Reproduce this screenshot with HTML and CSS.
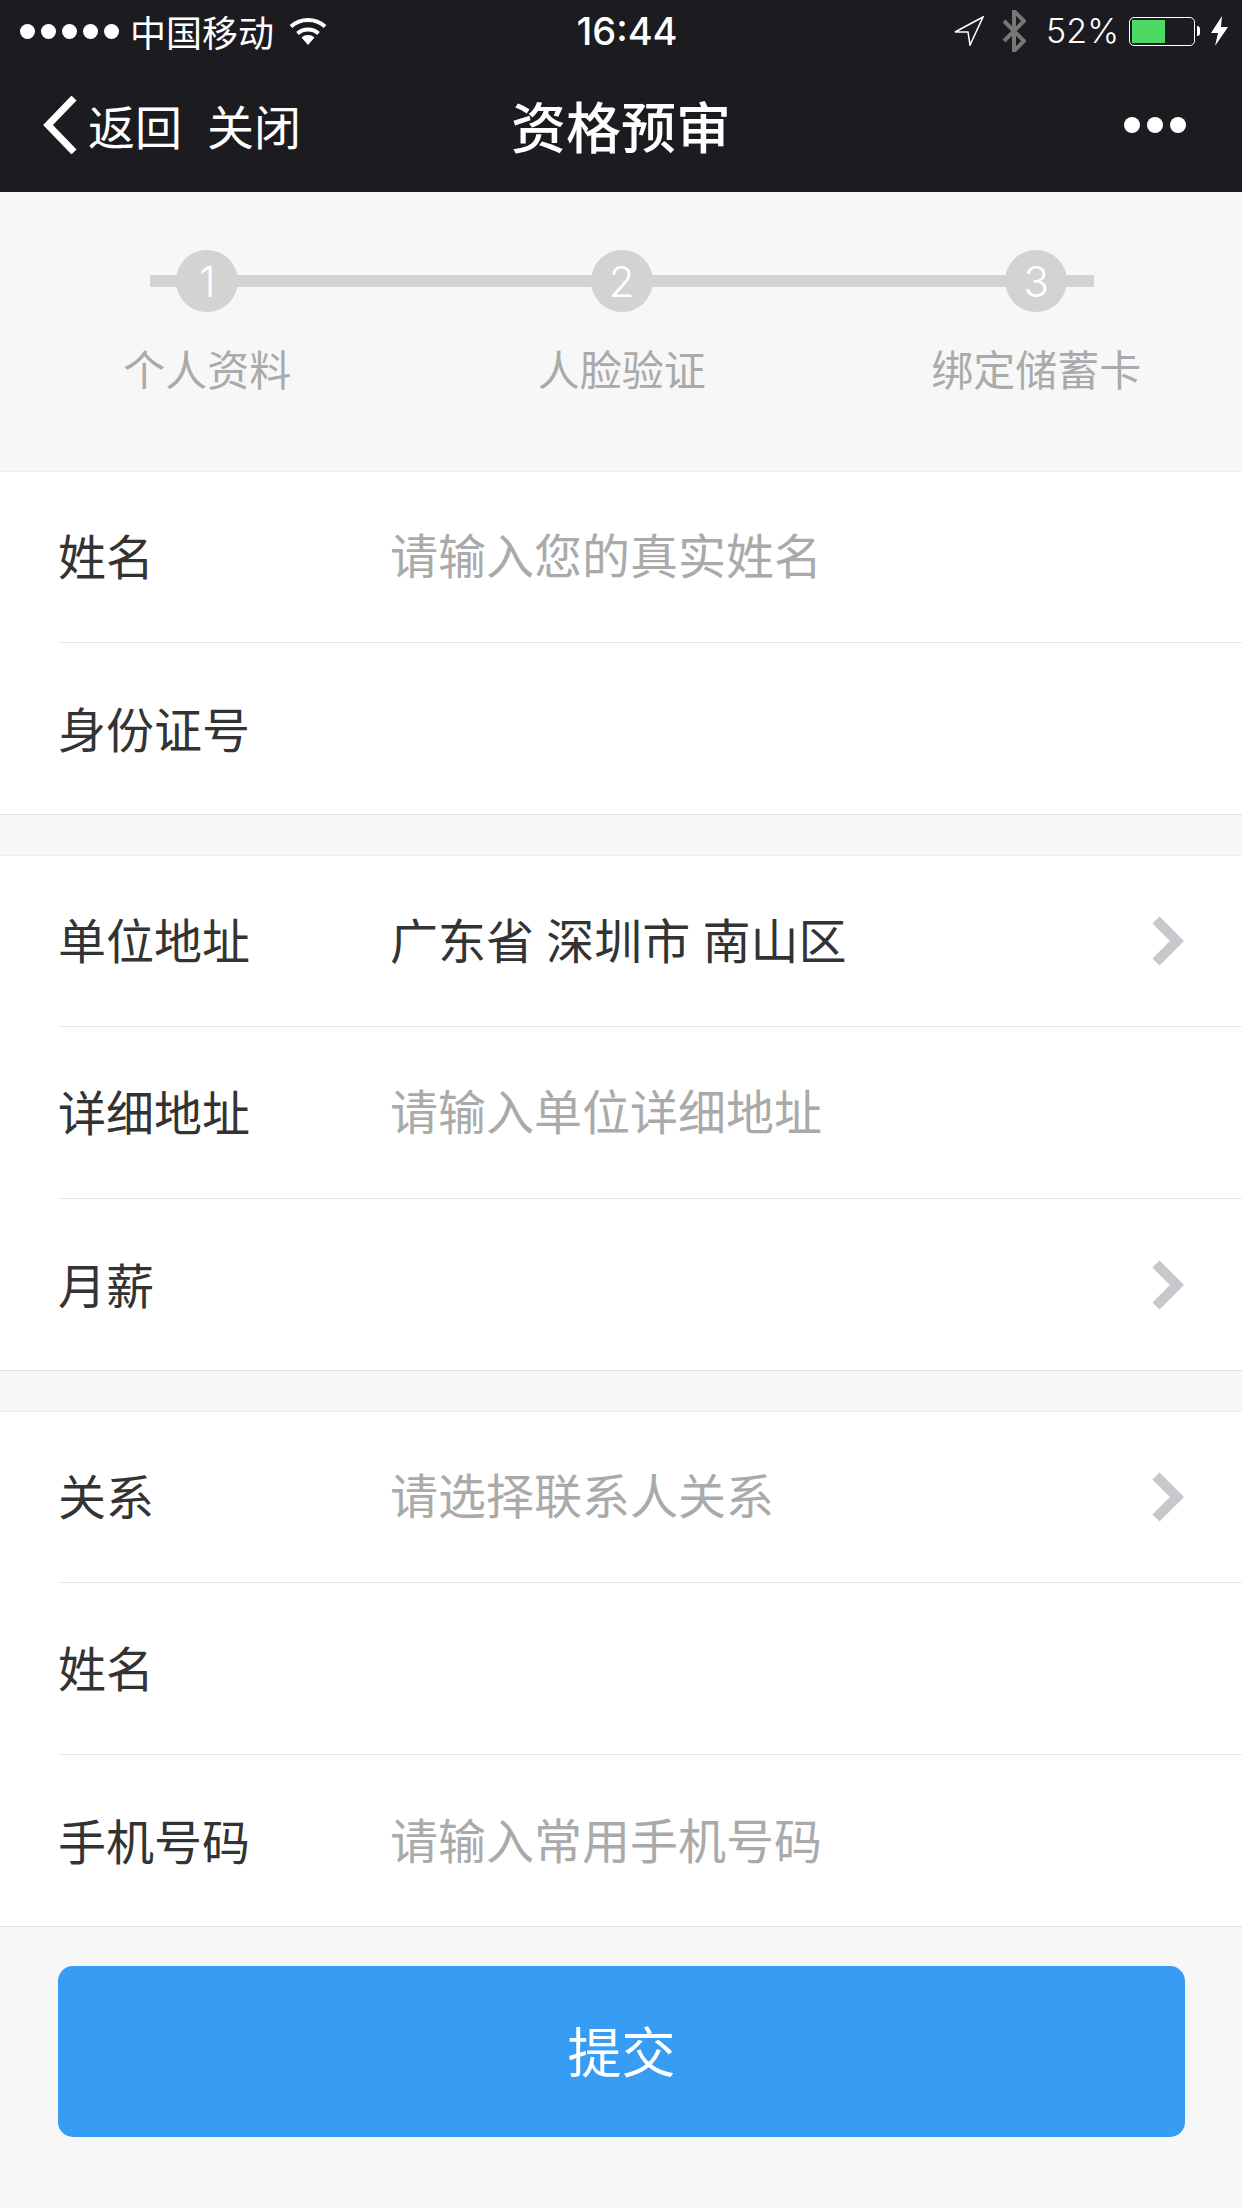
FILE: index.html
```html
<!DOCTYPE html>
<html lang="zh-CN">
<head>
<meta charset="utf-8">
<title>资格预审</title>
<link rel="stylesheet" href="styles.css">
</head>
<body>
<header class="top">
  <div class="status">
    <div class="status-left">
      <div class="signal"><i></i><i></i><i></i><i></i><i></i></div>
      <span class="carrier">中国移动</span>
      <svg class="wifi" width="38" height="27" viewBox="0 0 38 27"><path d="M19 27l-6.500-7.500a10 10 0 0 1 13 0z" fill="#fff"/><path d="M8.500 15.500a16 16 0 0 1 21 0" fill="none" stroke="#fff" stroke-width="4"/><path d="M2 8.500a25.500 25.500 0 0 1 34 0" fill="none" stroke="#fff" stroke-width="4"/></svg>
    </div>
    <div class="time">16:44</div>
    <div class="status-right">
      <svg class="loc" width="30" height="30" viewBox="0 0 30 30"><path d="M29 1L1 16l13 0 2 13z" fill="none" stroke="#fff" stroke-width="1.500"/></svg>
      <svg class="bt" width="24" height="42" viewBox="0 0 24 42"><path d="M2 11l20 20-10 10V1l10 10L2 31" fill="none" stroke="#777" stroke-width="4"/></svg>
      <span class="pct">52%</span>
      <div class="battery"><div class="battery-fill"></div></div>
      <div class="nub"></div>
      <svg class="bolt" width="17" height="30" viewBox="0 0 17 30"><path d="M11 0L0 17h7L4 30 17 11h-7z" fill="#fff"/></svg>
    </div>
  </div>
  <nav class="nav">
    <div class="nav-left">
      <svg class="back" width="34" height="58" viewBox="0 0 34 58"><path d="M31 2L5 29l26 27" fill="none" stroke="#fff" stroke-width="7"/></svg>
      <span class="back-text">返回</span>
      <span class="close-text">关闭</span>
    </div>
    <h1 class="title">资格预审</h1>
    <div class="more"><i></i><i></i><i></i></div>
  </nav>
</header>

<section class="steps">
  <div class="step"><div class="track"><span class="num">1</span></div><div class="step-label">个人资料</div></div>
  <div class="step"><div class="track"><span class="num">2</span></div><div class="step-label">人脸验证</div></div>
  <div class="step"><div class="track"><span class="num">3</span></div><div class="step-label">绑定储蓄卡</div></div>
</section>

<section class="group">
  <div class="row"><div class="row-in"><span class="label">姓名</span><span class="ph">请输入您的真实姓名</span></div></div>
  <div class="row"><div class="row-in"><span class="label">身份证号</span></div></div>
</section>

<section class="group">
  <div class="row"><div class="row-in"><span class="label">单位地址</span><span class="val">广东省 深圳市 南山区</span><svg class="chev" width="32" height="50" viewBox="0 0 32 50"><path d="M4 4l21 21L4 46" fill="none" stroke="#c7c7cc" stroke-width="10"/></svg></div></div>
  <div class="row"><div class="row-in"><span class="label">详细地址</span><span class="ph">请输入单位详细地址</span></div></div>
  <div class="row"><div class="row-in"><span class="label">月薪</span><svg class="chev" width="32" height="50" viewBox="0 0 32 50"><path d="M4 4l21 21L4 46" fill="none" stroke="#c7c7cc" stroke-width="10"/></svg></div></div>
</section>

<section class="group">
  <div class="row"><div class="row-in"><span class="label">关系</span><span class="ph">请选择联系人关系</span><svg class="chev" width="32" height="50" viewBox="0 0 32 50"><path d="M4 4l21 21L4 46" fill="none" stroke="#c7c7cc" stroke-width="10"/></svg></div></div>
  <div class="row"><div class="row-in"><span class="label">姓名</span></div></div>
  <div class="row"><div class="row-in"><span class="label">手机号码</span><span class="ph">请输入常用手机号码</span></div></div>
</section>

<div class="actions"><div class="submit">提交</div></div>
</body>
</html>
```
FILE: styles.css
```css
* { box-sizing: border-box; }
html, body { margin: 0; padding: 0; }
body {
  width: 1242px;
  height: 2208px;
  overflow: hidden;
  background: #f7f7f7;
  font-family: "Noto Sans CJK SC", "Noto Sans", sans-serif;
  color: #333;
}
.top { background: #1b1b20; color: #fff; height: 192px; }
.status {
  height: 60px;
  display: grid;
  grid-template-columns: 1fr auto 1fr;
  align-items: center;
  padding: 0 8px 0 20px;
}
.status-left, .status-right { display: flex; align-items: center; }
.status-right { justify-content: flex-end; }
.signal { display: flex; gap: 6px; }
.signal i { width: 15px; height: 15px; border-radius: 50%; background: #fff; display: block; }
.carrier { font-size: 36px; line-height: 60px; margin-left: 11px; }
.wifi { margin-left: 15px; }
.time { font-family: "Inter", "Liberation Sans", sans-serif; font-size: 38px; font-weight: 500; line-height: 62px; }
.loc { margin-right: 18px; }
.bt { margin-right: 20px; }
.pct { font-family: "Inter", "Liberation Sans", sans-serif; font-size: 34px; font-weight: 300; margin-right: 10px; line-height: 60px; }
.battery { width: 66px; height: 29px; border: 1.500px solid #fff; border-radius: 5px; padding: 2px; }
.battery-fill { width: 33px; height: 100%; background: #4cd964; }
.nub { width: 3px; height: 10px; background: #fff; border-radius: 0 3px 3px 0; margin: 0 11px 0 2px; }
.bolt { margin-right: 6px; }
.nav {
  height: 130px;
  display: grid;
  grid-template-columns: 1fr auto 1fr;
  align-items: center;
  padding: 0 43px;
}
.nav-left { display: flex; align-items: center; font-size: 47px; }
.back { margin-right: 11px; }
.back-text, .close-text { margin-bottom: 2px; }
.close-text { margin-left: 25px; }
.title { font-size: 55px; font-weight: 500; margin: 0 0 2px; line-height: 76px; }
.more { display: flex; gap: 7px; justify-content: flex-end; margin-right: 13px; }
.more i { width: 16px; height: 16px; border-radius: 50%; background: #fff; display: block; }
.steps {
  height: 279px;
  display: grid;
  grid-template-columns: repeat(3, 414.5px);
  padding-top: 58px;
}
.step { display: flex; flex-direction: column; align-items: center; }
.track { width: 100%; height: 62px; display: flex; justify-content: center; align-items: center; background: linear-gradient(#d3d3d3, #d3d3d3) center / 100% 12px no-repeat; }
.step:first-child .track { background-position: right center; background-size: 265px 12px; }
.step:last-child .track { background-position: left center; background-size: 265px 12px; }
.num {
  width: 62px; height: 62px; border-radius: 50%; background: #d3d3d3; color: #fff;
  font-family: "Inter", "Liberation Sans", sans-serif; font-size: 42px; font-weight: 300;
  display: flex; align-items: center; justify-content: center;
}
.step-label { font-size: 42px; line-height: 60px; margin-top: 26px; color: #aaa; }
.group {
  background: #fff;
  box-shadow: inset 0 1px #eeeeee, inset 0 -1px #e3e3e3;
  margin-bottom: 40px;
}
.group:first-of-type { box-shadow: inset 0 1px #e3e3e3, inset 0 -1px #e3e3e3; }
.row { height: 172px; padding-left: 58px; }
.row-in {
  height: 100%;
  display: flex;
  align-items: center;
  padding-right: 58px;
  border-bottom: 1px solid #e8e8e8;
  font-size: 48px;
}
.row:last-child .row-in { border-bottom: 0; }
.label { width: 332px; flex: none; color: #333; margin-bottom: 5px; }
.ph { color: #aaa; margin-bottom: 7px; }
.val { color: #333; margin-bottom: 6px; word-spacing: 1.500px; }
.chev { margin-left: auto; flex: none; }
.actions { padding: 0 57px 0 58px; margin-top: -1px; }
.submit {
  height: 171px;
  background: #379df4;
  border-radius: 15px;
  color: #fff;
  font-size: 54px;
  padding-bottom: 4px;
  display: flex;
  align-items: center;
  justify-content: center;
}
```
